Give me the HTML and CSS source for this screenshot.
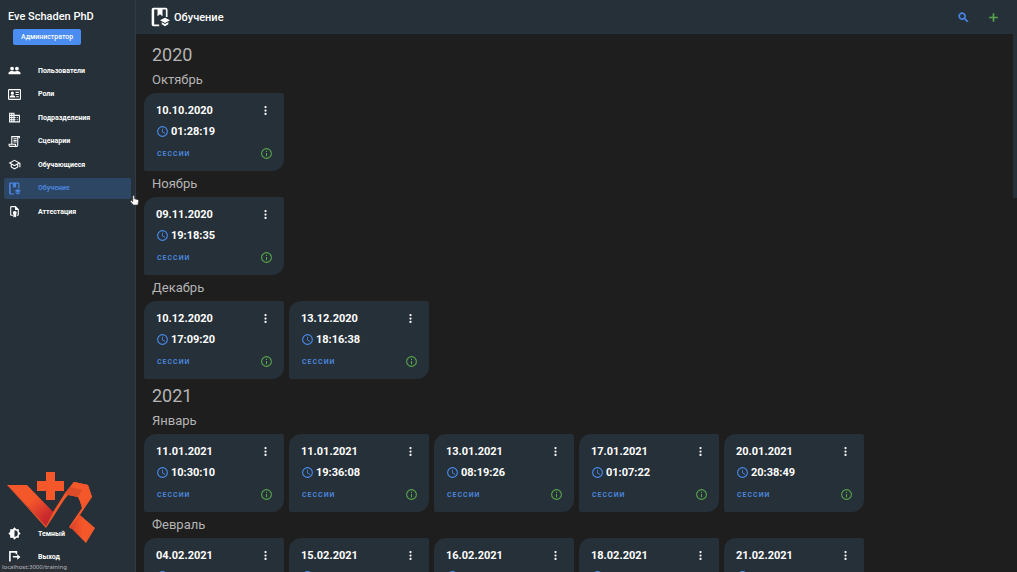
FILE: index.html
```html
<!DOCTYPE html>
<html lang="ru">
<head>
<meta charset="utf-8">
<title>Обучение</title>
<link rel="stylesheet" href="styles.css">
</head>
<body>
<svg class="sprite" aria-hidden="true">
  <symbol id="people" viewBox="0 0 24 24"><path d="M16.5 13c-1.2 0-3.07.34-4.5 1-1.43-.67-3.3-1-4.5-1C5.33 13 1 14.08 1 16.25V19h22v-2.75c0-2.17-4.33-3.25-6.5-3.25zM7.5 12a3.5 3.5 0 1 0 0-7 3.5 3.5 0 0 0 0 7zm9 0a3.5 3.5 0 1 0 0-7 3.5 3.5 0 0 0 0 7z"/></symbol>
  <symbol id="roles" viewBox="0 0 24 24"><path fill-rule="evenodd" d="M22 2H2a2 2 0 0 0-2 2v16c0 1.100.9 2 2 2h20c1.100 0 2-.9 2-2V4a2 2 0 0 0-2-2zM2 20V4h20v16H2zM8 6.500a3 3 0 1 0 0 6 3 3 0 0 0 0-6zM3 17.500h10.500v-1c0-2-3.500-3-5.500-3s-5 1-5 3zM14 7h6v2h-6zM14 11h6v2h-6zM15 15h5v2h-5z"/></symbol>
  <symbol id="building" viewBox="0 0 24 24"><path fill-rule="evenodd" d="M12 7V3H2v18h20V7H12zM6 19H4v-2h2v2zm0-4H4v-2h2v2zm0-4H4V9h2v2zm0-4H4V5h2v2zm4 12H8v-2h2v2zm0-4H8v-2h2v2zm0-4H8V9h2v2zm0-4H8V5h2v2zm10 12h-8v-2h2v-2h-2v-2h2v-2h-2V9h8v10zm-2-8h-2v2h2v-2zm0 4h-2v2h2v-2z"/></symbol>
  <symbol id="script" viewBox="0 0 24 24"><path fill-rule="evenodd" d="M6 2h16v4h-2V4h-1v15a3 3 0 0 1-3 3H4a3 3 0 0 1-3-3v-3h5V2zm2 2v12h7v3a1 1 0 0 0 2 0V4H8zM3 18v1c0 .6.4 1 1 1h9v-2H3zM10 6h6v2h-6zM10 9h6v2h-6zM10 12h6v2h-6z"/></symbol>
  <symbol id="school" viewBox="0 0 24 24"><path fill-rule="evenodd" d="M12 3 1 9l4 2.180v6L12 21l7-3.820v-6l2-1.090V17h2V9L12 3zm6.820 6L12 12.720 5.180 9 12 5.280 18.820 9zM17 16l-5 2.720L7 16v-3.730L12 15l5-2.730V16z"/></symbol>
  <symbol id="training" viewBox="0 0 24 24"><path d="M4 1h15a2 2 0 0 1 2 2v9h-2V3h-4v8l-3-2.200L9 11V3H5v18h6v2H4a2 2 0 0 1-2-2V3a2 2 0 0 1 2-2z"/><path d="m18 13-6 3 6 3.200 6-3.200zM14 18.400v2.300l4 2.300 4-2.300v-2.300L18 20.500z"/></symbol>
  <symbol id="exam" viewBox="0 0 24 24"><path d="M14 2H6a2 2 0 0 0-2 2v14c0 1.100.9 2 2 2h3v-2H6V4h7v5h5v9h-2v2h2a2 2 0 0 0 2-2V8l-6-6z"/><path d="M12.500 11a3.500 3.500 0 0 0-2.500 6v6l2.500-1.500L15 23v-6a3.500 3.500 0 0 0-2.500-6z"/></symbol>
  <symbol id="theme" viewBox="0 0 24 24"><path fill-rule="evenodd" d="M20 8.690V4h-4.690L12 .69 8.690 4H4v4.690L.69 12 4 15.310V20h4.690L12 23.310 15.310 20H20v-4.690L23.310 12 20 8.690zM12 18V6a6 6 0 0 1 0 12z"/></symbol>
  <symbol id="logout" viewBox="0 0 24 24"><path d="M2 2h15v6h-3V5H5v16H2zM17 8l6 5-6 5v-4H9v-3h8z"/></symbol>
  <symbol id="search" viewBox="0 0 24 24"><path fill-rule="evenodd" stroke="currentColor" d="M15.500 14h-.79l-.28-.27a6.500 6.500 0 1 0-.7.700l.27.280v.790l5 4.990L20.490 19l-4.990-5zm-6 0a4.500 4.500 0 1 1 0-9 4.500 4.500 0 0 1 0 9z"/></symbol>
  <symbol id="plus" viewBox="0 0 24 24"><path d="M20 13.500h-6.500V20h-3v-6.500H4v-3h6.500V4h3v6.500H20z"/></symbol>
  <symbol id="more" viewBox="0 0 24 24"><circle cx="12" cy="6.500" r="1.800"/><circle cx="12" cy="12" r="1.800"/><circle cx="12" cy="17.500" r="1.800"/></symbol>
  <symbol id="clock" viewBox="0 0 24 24"><path fill-rule="evenodd" d="M12 2a10 10 0 1 0 0 20 10 10 0 0 0 0-20zm0 18a8 8 0 1 1 0-16 8 8 0 0 1 0 16zM12.500 7H11v6l5.250 3.150.75-1.230-4.500-2.670z"/></symbol>
  <symbol id="info" viewBox="0 0 24 24"><path fill-rule="evenodd" d="M12 2a10 10 0 1 0 0 20 10 10 0 0 0 0-20zm0 18a8 8 0 1 1 0-16 8 8 0 0 1 0 16zM11 7h2v2h-2zM11 11h2v6h-2z"/></symbol>
</svg>
<div class="app">
  <aside class="sidebar">
    <div class="user">Eve Schaden PhD</div>
    <button class="role" type="button">Администратор</button>
    <nav class="menu">
      <a class="item" href="#users"><svg class="icon"><use href="#people"/></svg>Пользователи</a>
      <a class="item" href="#roles"><svg class="icon"><use href="#roles"/></svg>Роли</a>
      <a class="item" href="#departments"><svg class="icon"><use href="#building"/></svg>Подразделения</a>
      <a class="item" href="#scripts"><svg class="icon"><use href="#script"/></svg>Сценарии</a>
      <a class="item" href="#students"><svg class="icon"><use href="#school"/></svg>Обучающиеся</a>
      <a class="item active" href="#training" aria-current="page"><svg class="icon"><use href="#training"/></svg>Обучение</a>
      <a class="item" href="#exam"><svg class="icon"><use href="#exam"/></svg>Аттестация</a>
    </nav>
    <div class="bottom">
      <button class="item" type="button"><svg class="icon"><use href="#theme"/></svg>Темный</button>
      <button class="item" type="button"><svg class="icon"><use href="#logout"/></svg>Выход</button>
    </div>
    <svg class="logo" viewBox="0 0 90 74" aria-hidden="true">
      <defs>
        <linearGradient id="wing" x1="0" y1="0" x2="1" y2="1"><stop offset=".45" stop-color="#f4572a"/><stop offset=".85" stop-color="#c9282d"/></linearGradient>
        <linearGradient id="foot" x1="0" y1="0" x2="1" y2="0"><stop offset="0" stop-color="#d8402a"/><stop offset=".5" stop-color="#f4572a"/></linearGradient>
      </defs>
      <path fill="#f4572a" d="M39 2h9v9h9v10h-9v9h-9v-9h-9V11h9z"/>
      <path fill="url(#wing)" d="M0 15h20l26 27-7 14z"/>
      <path fill="#f4572a" d="m0 15 39 41 7-14 12-19 9-11 14 3 4 12-12 18-9 14-2-2 13-19-2-7-2-4-10-2-4 5-18 28z"/>
      <path fill="url(#wing)" d="M3 16h17l26 26-7 11z"/>
      <path fill="#dc4c28" d="m58 23 9-11 14 3-10 12-10-2z"/>
      <path fill="#f4572a" d="m67 12 14 3 4 12-10 11-2-7-2-4 4-7-12-3z"/>
      <path fill="url(#foot)" d="m73 45 15 13-9 15-16-16z"/>
    </svg>
  </aside>
  <main class="main">
    <header class="header">
      <svg class="page-icon"><use href="#training"/></svg>
      <h1 class="title">Обучение</h1>
      <button class="action find" type="button" aria-label="Поиск"><svg class="icon"><use href="#search"/></svg></button>
      <button class="action add" type="button" aria-label="Добавить"><svg class="icon"><use href="#plus"/></svg></button>
    </header>
    <div class="content" id="content"></div>
    <div class="thumb"></div>
  </main>
</div>
<svg class="cursor" viewBox="0 0 16 20" aria-hidden="true"><path fill="#fff" stroke="#333" d="M5 10V2.500a1.500 1.500 0 0 1 3 0V7l6 1.500q1.500.5 1.200 2.500L14 18H6L1 12q-.5-2 1.500-2L5 12z"/></svg>
<div class="status">localhost:3000/training</div>
<script src="cards.js"></script>
</body>
</html>
```
FILE: styles.css
```css
* { box-sizing: border-box; }
body {
  margin: 0;
  background: #1e1e1e;
  color: #fff;
  font-family: Roboto, "Noto Sans", sans-serif;
  overflow: hidden;
}
button { border: 0; padding: 0; background: none; font: inherit; color: inherit; cursor: pointer; }
svg { fill: currentColor; flex: none; }
.sprite { display: none; }
.app { display: flex; height: 100vh; }

.sidebar {
  position: relative;
  flex: 0 0 136px;
  display: flex;
  flex-direction: column;
  align-items: flex-start;
  padding: 10px 4px 5px;
  background: #263038;
  border-right: 1px solid #303b45;
}
.user { padding-left: 4px; font-size: 11px; line-height: 14px; font-weight: 500; }
.role {
  margin: 5px 0 0 9px;
  padding: 0 8px;
  border-radius: 2px;
  background: #4a8cf0;
  font-size: 7px;
  line-height: 16px;
  font-weight: 500;
}
.menu {
  display: flex;
  flex-direction: column;
  justify-content: space-between;
  align-self: stretch;
  height: 162px;
  margin-top: 15px;
}
.item {
  display: flex;
  align-items: center;
  gap: 17px;
  height: 21px;
  padding-left: 4px;
  color: #fff;
  font-size: 7px;
  font-weight: 700;
  text-decoration: none;
}
.active { background: #2d4664; color: #4a84dc; border-radius: 2px; }
.icon { width: 13px; height: 13px; }
.bottom { display: grid; gap: 2px; margin-top: auto; }
.logo { position: absolute; left: 7px; bottom: 28px; width: 90px; height: 74px; pointer-events: none; }

.main { position: relative; flex: 1; min-width: 0; display: flex; flex-direction: column; }
.header {
  flex: none;
  display: flex;
  align-items: center;
  height: 34px;
  padding: 0 17px 0 14px;
  background: #263038;
}
.page-icon { width: 20px; height: 20px; }
.title { margin: 0 auto 0 4px; font-size: 11px; font-weight: 500; }
.action { display: flex; margin-left: 17px; }
.find { color: #4a8cf0; }
.add { color: #58a54c; }

.content { flex: 1; overflow: auto; scrollbar-width: none; padding: 4px 8px 0; color: #b4b4b4; }
.year { margin: 0; padding: 4px 8px 0; font-size: 18px; line-height: 25px; font-weight: 400; }
.month { margin: 0; padding: 0 8px; font-size: 13px; line-height: 26px; font-weight: 400; }
.cards { display: flex; flex-wrap: wrap; gap: 5px; }
.card {
  display: grid;
  grid-template-columns: 1fr auto;
  grid-template-rows: 22px 20px 25px;
  align-items: center;
  width: 140px;
  height: 78px;
  padding: 6px 11px 5px 12px;
  border-radius: 12px 2px 12px 2px;
  background: #263038;
  color: #fff;
  font-size: 11px;
  font-weight: 700;
}
.more { display: flex; justify-self: end; }
.more .icon { width: 15px; height: 15px; }
.time { display: flex; align-items: center; grid-column: 1 / -1; gap: 2px; }
.time .icon { color: #4a8cf0; }
.sessions { justify-self: start; padding-left: 1px; color: #4a84dc; font-size: 7px; font-weight: 700; letter-spacing: 1px; }
.info { display: flex; justify-self: end; color: #58a54c; }
.thumb { position: absolute; top: 34px; right: 0; width: 4px; height: 164px; background: #263038; }
.cursor { position: absolute; left: 130px; top: 194px; width: 9px; height: 13px; }
.status {
  position: absolute;
  left: 0;
  bottom: 0;
  padding: 0 2px;
  border-top-right-radius: 2px;
  background: #2b3036;
  color: #b5bbc1;
  font-size: 6px;
  line-height: 10px;
  font-family: "Noto Sans", sans-serif;
}
```
FILE: cards.js
```js
const years = [
  ["2020", [
    ["Октябрь", [["10.10.2020", "01:28:19"]]],
    ["Ноябрь", [["09.11.2020", "19:18:35"]]],
    ["Декабрь", [["10.12.2020", "17:09:20"], ["13.12.2020", "18:16:38"]]]
  ]],
  ["2021", [
    ["Январь", [["11.01.2021", "10:30:10"], ["11.01.2021", "19:36:08"], ["13.01.2021", "08:19:26"], ["17.01.2021", "01:07:22"], ["20.01.2021", "20:38:49"]]],
    ["Февраль", [["04.02.2021", ""], ["15.02.2021", ""], ["16.02.2021", ""], ["18.02.2021", ""], ["21.02.2021", ""]]]
  ]]
];
const icon = name => `<svg class="icon"><use href="#${name}"/></svg>`;
const card = ([date, time]) => `<article class="card">
  <span>${date}</span><button class="more" type="button" aria-label="Меню">${icon("more")}</button>
  <span class="time">${icon("clock")}${time}</span>
  <button class="sessions" type="button">СЕССИИ</button><button class="info" type="button" aria-label="Информация">${icon("info")}</button>
</article>`;
const month = ([name, items]) => `<h3 class="month">${name}</h3><div class="cards">${items.map(card).join("")}</div>`;
document.getElementById("content").innerHTML = years
  .map(([year, months]) => `<h2 class="year">${year}</h2>${months.map(month).join("")}`)
  .join("");
```
